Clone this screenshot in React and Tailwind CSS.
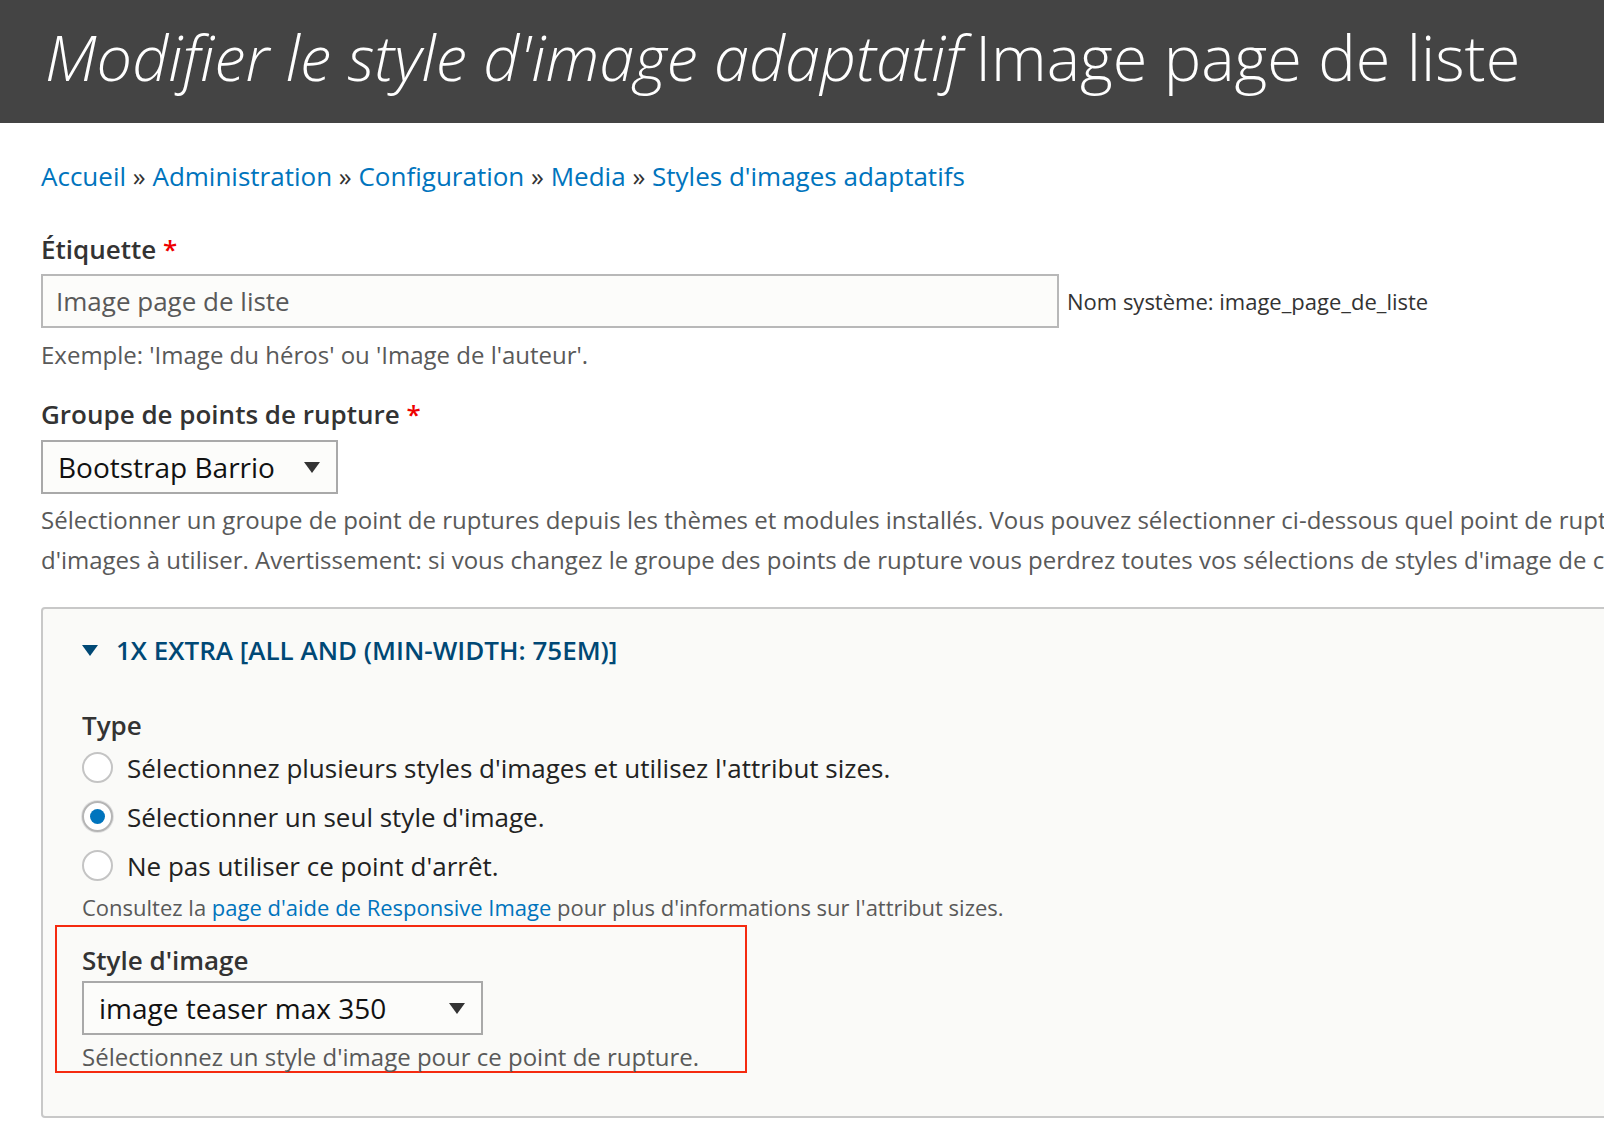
import { useState } from 'react';

const font = { fontFamily: '"Open Sans", "Liberation Sans", sans-serif' };

const Caret = ({ className = '' }) => (
  <svg width="16" height="11" viewBox="0 0 16 11" className={className}>
    <path d="M0 0 H16 L8 11 Z" fill="currentColor" />
  </svg>
);

const Select = ({ value, width }) => (
  <div
    className={`flex h-[54px] items-center justify-between border-2 border-[#a9a9a9] bg-[#fcfcfa] pl-[15px] pr-[16px] text-[28px] text-[#111] ${width}`}
  >
    <span>{value}</span>
    <Caret className="text-[#333]" />
  </div>
);

const Radio = ({ checked, label, onClick }) => (
  <div className="flex h-[49px] cursor-pointer items-center" onClick={onClick}>
    <div
      className={`flex h-[31px] w-[31px] items-center justify-center rounded-full border-2 bg-white ${
        checked ? 'border-[#b5b5b5] shadow-[0_0_0_1px_#e2e2e2]' : 'border-[#c4c4c4]'
      }`}
    >
      {checked && <div className="h-[15px] w-[15px] rounded-full bg-[#0074bd]" />}
    </div>
    <span className="ml-[14px] text-[26px] leading-[36px] text-[#222]">{label}</span>
  </div>
);

const App = () => {
  const [type, setType] = useState('single');
  const [open, setOpen] = useState(true);

  return (
    <div className="min-h-screen w-full overflow-hidden bg-white" style={font}>
      {/* Header */}
      <div className="flex h-[123px] items-center bg-[#444444] pb-[10px] pl-[45px]">
        <h1 className="whitespace-nowrap text-[63px] font-light leading-none text-white">
          <em className="pr-[12px]">Modifier le style d'image adaptatif</em>Image page de liste
        </h1>
      </div>

      <div className="w-[1800px] pl-[41px]">
        {/* Breadcrumb */}
        <nav className="mt-[35px] text-[26px] leading-[36px] text-[#333]">
          <a className="text-[#0074bd]">Accueil</a> » <a className="text-[#0074bd]">Administration</a> »{' '}
          <a className="text-[#0074bd]">Configuration</a> » <a className="text-[#0074bd]">Media</a> »{' '}
          <a className="text-[#0074bd]">Styles d'images adaptatifs</a>
        </nav>

        {/* Label */}
        <label className="mt-[37px] block text-[26px] font-semibold leading-[36px] text-[#333]">
          Étiquette <span className="text-[#e00]">*</span>
        </label>
        <div className="mt-[7px] flex items-center">
          <div className="flex h-[54px] w-[1018px] items-center border-2 border-[#b8b8b8] bg-[#fcfcfa] pl-[13px] text-[26px] text-[#595959]">
            Image page de liste
          </div>
          <span className="ml-[8px] text-[22px] text-[#333]">Nom système: image_page_de_liste</span>
        </div>
        <p className="mt-[12px] text-[24px] leading-[30px] text-[#595959]">
          Exemple: 'Image du héros' ou 'Image de l'auteur'.
        </p>

        {/* Breakpoint group */}
        <label className="mt-[26px] block text-[26px] font-semibold leading-[36px] text-[#333]">
          Groupe de points de rupture <span className="text-[#e00]">*</span>
        </label>
        <div className="mt-[8px]">
          <Select value="Bootstrap Barrio" width="w-[297px]" />
        </div>
        <div className="mt-[6px] whitespace-nowrap text-[24px] leading-[40px] text-[#595959]">
          <p>
            Sélectionner un groupe de point de ruptures depuis les thèmes et modules installés. Vous pouvez sélectionner
            ci-dessous quel point de rupture utiliser dans ce groupe. Vous pouvez aussi sélectionner quel style ou quels styles
          </p>
          <p>
            d'images à utiliser. Avertissement: si vous changez le groupe des points de rupture vous perdrez toutes vos
            sélections de styles d'image de chaque point de rupture.
          </p>
        </div>

        {/* Details */}
        <div className="mt-[27px] rounded-[4px] border-2 border-[#c8c8c8] bg-[#fafaf8] pb-[43px] pl-[39px]">
          <div
            className="flex cursor-pointer items-center pt-[23px] text-[26px] font-semibold uppercase leading-[36px] text-[#004875]"
            onClick={() => setOpen(!open)}
          >
            <Caret className={`mr-[18px] ${open ? '' : '-rotate-90'}`} />
            1x extra [all and (min-width: 75em)]
          </div>

          {open && (
            <>
              <label className="mt-[39px] block text-[26px] font-semibold leading-[36px] text-[#333]">Type</label>
              <Radio
                checked={type === 'multi'}
                onClick={() => setType('multi')}
                label="Sélectionnez plusieurs styles d'images et utilisez l'attribut sizes."
              />
              <Radio
                checked={type === 'single'}
                onClick={() => setType('single')}
                label="Sélectionner un seul style d'image."
              />
              <Radio
                checked={type === 'none'}
                onClick={() => setType('none')}
                label="Ne pas utiliser ce point d'arrêt."
              />
              <p className="mt-[2px] text-[22px] leading-[30px] text-[#595959]">
                Consultez la <a className="text-[#0074bd]">page d'aide de Responsive Image</a> pour plus d'informations sur
                l'attribut sizes.
              </p>

              {/* Highlighted field */}
              <div className="ml-[-27px] mt-[3px] w-[692px] border-2 border-[#f52a10] pl-[25px] pt-[15px]">
                <label className="block text-[26px] font-semibold leading-[36px] text-[#333]">Style d'image</label>
                <div className="mt-[3px]">
                  <Select value="image teaser max 350" width="w-[401px]" />
                </div>
                <p className="mt-[8px] text-[24px] leading-[28px] text-[#595959]">
                  Sélectionnez un style d'image pour ce point de rupture.
                </p>
              </div>
            </>
          )}
        </div>
      </div>
    </div>
  );
};

export default App;
